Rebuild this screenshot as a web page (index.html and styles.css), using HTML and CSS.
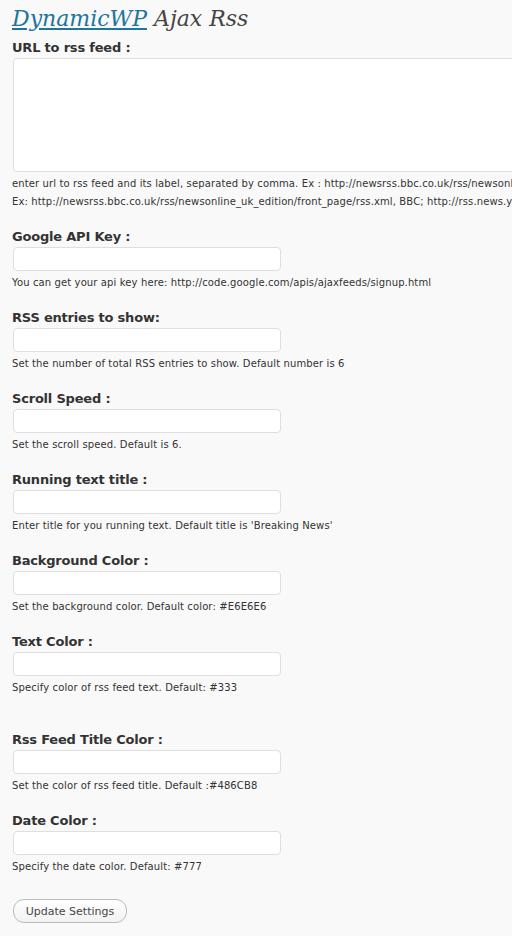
FILE: index.html
```html
<!DOCTYPE html>
<html>
<head>
<meta charset="utf-8">
<link rel="stylesheet" href="styles.css">
</head>
<body>
<div class="wrap">
  <h2 class="title"><a href="#">DynamicWP</a> Ajax Rss</h2>
  <form class="form">
    <div class="field first">
      <label class="lbl">URL to rss feed :</label>
      <textarea class="area"></textarea>
      <p class="help">enter url to rss feed and its label, separated by comma. Ex : http://newsrss.bbc.co.uk/rss/newsonline_uk_edition/front_page/rss.xml</p>
      <p class="help tight">Ex: http://newsrss.bbc.co.uk/rss/newsonline_uk_edition/front_page/rss.xml, BBC; http://rss.news.yahoo.com/rss/topstories, Yahoo</p>
    </div>
    <div class="field">
      <label class="lbl">Google API Key :</label>
      <input class="inp" type="text">
      <p class="help">You can get your api key here: http://code.google.com/apis/ajaxfeeds/signup.html</p>
    </div>
    <div class="field">
      <label class="lbl">RSS entries to show:</label>
      <input class="inp" type="text">
      <p class="help">Set the number of total RSS entries to show. Default number is 6</p>
    </div>
    <div class="field">
      <label class="lbl">Scroll Speed :</label>
      <input class="inp" type="text">
      <p class="help">Set the scroll speed. Default is 6.</p>
    </div>
    <div class="field">
      <label class="lbl">Running text title :</label>
      <input class="inp" type="text">
      <p class="help">Enter title for you running text. Default title is 'Breaking News'</p>
    </div>
    <div class="field">
      <label class="lbl">Background Color :</label>
      <input class="inp" type="text">
      <p class="help">Set the background color. Default color: #E6E6E6</p>
    </div>
    <div class="field spaced">
      <label class="lbl">Text Color :</label>
      <input class="inp" type="text">
      <p class="help">Specify color of rss feed text. Default: #333</p>
    </div>
    <div class="field">
      <label class="lbl">Rss Feed Title Color :</label>
      <input class="inp" type="text">
      <p class="help">Set the color of rss feed title. Default :#486CB8</p>
    </div>
    <div class="field">
      <label class="lbl">Date Color :</label>
      <input class="inp" type="text">
      <p class="help">Specify the date color. Default: #777</p>
    </div>
    <div class="actions">
      <button class="btn" type="button">Update Settings</button>
    </div>
  </form>
</div>
</body>
</html>
```
FILE: styles.css
```css
html, body {
  margin: 0;
  padding: 0;
  background: #f9f9f9;
  overflow: hidden;
}
body {
  font-family: "DejaVu Sans", Verdana, sans-serif;
  color: #333;
}
.wrap {
  padding: 0 0 0 12px;
  width: 1000px;
}
.title {
  margin: 0;
  padding-top: 3px;
  font-family: "DejaVu Serif", Georgia, serif;
  font-style: italic;
  font-weight: normal;
  font-size: 22px;
  line-height: 32px;
  color: #464646;
}
.title a {
  color: #21759b;
  text-decoration: underline;
}
.form {
  display: flex;
  flex-direction: column;
}
.field {
  display: flex;
  flex-direction: column;
  align-items: flex-start;
  padding-top: 18px;
}
.field.first {
  padding-top: 5px;
}
.field.spaced {
  padding-bottom: 17px;
}
.lbl {
  display: block;
  font-weight: bold;
  font-size: 13px;
  line-height: 16px;
  letter-spacing: -0.2px;
  color: #333;
}
.area {
  box-sizing: border-box;
  margin: 2px 0 0 1px;
  width: 600px;
  height: 114px;
  background: #fff;
  border: 1px solid #dfdfdf;
  border-radius: 4px;
  resize: none;
}
.inp {
  box-sizing: border-box;
  margin: 2px 0 0 1px;
  width: 268px;
  height: 24px;
  background: #fff;
  border: 1px solid #dfdfdf;
  border-radius: 4px;
  padding: 0;
}
.help {
  margin: 3px 0 0;
  font-size: 10px;
  line-height: 18px;
  letter-spacing: 0.12px;
  color: #333;
  white-space: nowrap;
}
.help.tight {
  margin-top: 0;
}
.actions {
  padding-top: 23px;
}
.btn {
  margin-left: 1px;
  box-sizing: border-box;
  width: 114px;
  height: 24px;
  font-family: "DejaVu Sans", Verdana, sans-serif;
  font-size: 11px;
  color: #464646;
  background: linear-gradient(#fff, #f2f2f2);
  border: 1px solid #bbb;
  border-radius: 11px;
  padding: 0;
}
```
